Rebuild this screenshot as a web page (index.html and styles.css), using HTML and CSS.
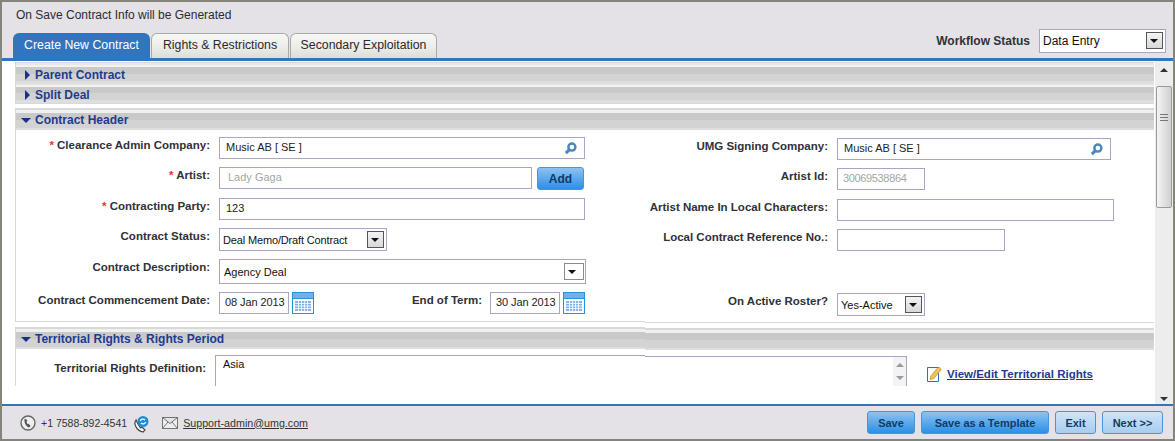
FILE: index.html
```html
<!doctype html>
<html lang="en">
<head>
<title>Create New Contract</title>
<meta charset="utf-8">
<link rel="stylesheet" href="styles.css">
</head>
<body>
<div class="window">
    <div class="notice">On Save Contract Info will be Generated</div>

    <div class="tabbar">
        <div class="tabs">
            <div class="tab active">Create New Contract</div>
            <div class="tab">Rights &amp; Restrictions</div>
            <div class="tab">Secondary Exploitation</div>
        </div>
        <div class="workflow">
            <span class="workflow-label">Workflow Status</span>
            <div class="select workflow-select">Data Entry<span class="drop"></span></div>
        </div>
    </div>

    <div class="content">
        <div class="scroll-area">
            <div class="collapsed">
                <div class="bar first"><span class="tri right"></span>Parent Contract</div>
                <div class="bar"><span class="tri right"></span>Split Deal</div>
            </div>

            <div class="section">
                <div class="bar"><span class="tri down"></span>Contract Header</div>
                <div class="form">
                    <div class="col">
                        <div class="row">
                            <label><i>*</i> Clearance Admin Company:</label>
                            <div class="input w-366">Music AB [ SE ]
                                <svg class="lens" viewBox="0 0 14 14"><circle cx="8.500" cy="5.500" r="3.800" fill="none" stroke="#4a86b8" stroke-width="2.600"/><path d="M5.500 8.500 2 12" stroke="#4a86b8" stroke-width="3.200"/></svg>
                            </div>
                        </div>
                        <div class="row">
                            <label><i>*</i> Artist:</label>
                            <div class="input w-313 grey">Lady Gaga</div>
                            <div class="btn add">Add</div>
                        </div>
                        <div class="row">
                            <label><i>*</i> Contracting Party:</label>
                            <div class="input w-366">123</div>
                        </div>
                        <div class="row">
                            <label>Contract Status:</label>
                            <div class="select w-168 tight">Deal Memo/Draft Contract<span class="drop"></span></div>
                        </div>
                        <div class="row tall">
                            <label>Contract Description:</label>
                            <div class="select flat w-367">Agency Deal<span class="drop"></span></div>
                        </div>
                        <div class="row date-row">
                            <label>Contract Commencement Date:</label>
                            <div class="input date">08 Jan 2013</div>
                            <svg class="cal"><use href="#cal"/></svg>
                            <label class="end-label">End of Term:</label>
                            <div class="input date">30 Jan 2013</div>
                            <svg class="cal"><use href="#cal"/></svg>
                        </div>
                    </div>
                    <div class="col right-col">
                        <div class="row">
                            <label>UMG Signing Company:</label>
                            <div class="input w-274">Music AB [ SE ]
                                <svg class="lens" viewBox="0 0 14 14"><circle cx="8.500" cy="5.500" r="3.800" fill="none" stroke="#4a86b8" stroke-width="2.600"/><path d="M5.500 8.500 2 12" stroke="#4a86b8" stroke-width="3.200"/></svg>
                            </div>
                        </div>
                        <div class="row">
                            <label>Artist Id:</label>
                            <div class="input w-88 grey id">30069538864</div>
                        </div>
                        <div class="row">
                            <label>Artist Name In Local Characters:</label>
                            <div class="input w-277"></div>
                        </div>
                        <div class="row">
                            <label>Local Contract Reference No.:</label>
                            <div class="input w-168"></div>
                        </div>
                        <div class="row tall"></div>
                        <div class="row">
                            <label>On Active Roster?</label>
                            <div class="select w-88">Yes-Active<span class="drop"></span></div>
                        </div>
                    </div>
                </div>
            </div>

            <div class="section last">
                <div class="bar"><span class="tri down"></span>Territorial Rights &amp; Rights Period</div>
                <div class="territory">
                    <label>Territorial Rights Definition:</label>
                    <div class="textarea">Asia
                        <div class="mini-scroll"><span class="up"></span><span class="dn"></span></div>
                    </div>
                    <svg class="pencil" viewBox="0 0 16 16">
                        <path d="M.5 1.500h11v14H.5z" fill="#fff" stroke="#2f6fb5"/>
                        <path d="M3 13.500l.8-3.500 7.200-8.500c1-.8 3.500 1 3 2.500l-7.200 8.500z" fill="#f3c255" stroke="#b98a33" stroke-width=".7"/>
                    </svg>
                    <a class="edit-link">View/Edit Territorial Rights</a>
                </div>
            </div>
        </div>

        <div class="scrollbar">
            <span class="arrow up"></span>
            <div class="thumb"><span></span></div>
            <span class="arrow dn"></span>
        </div>
    </div>

    <div class="footer">
        <div class="contact">
            <svg class="phone" viewBox="0 0 16 16"><circle cx="8" cy="8" r="7" fill="#eeeef0" stroke="#666" stroke-width="1.400"/><path d="M5 3.500c-1.500 2.500 0 6.500 3.500 9l2.200-1.200-2-2.600-1.200.6-1-2.800 1-.9z" fill="#555"/></svg>
            <span class="phone-no">+1 7588-892-4541</span>
            <svg class="skype" viewBox="0 0 16 18"><path d="M3 5c-3 4 1 11 7 12l2-2-3-3-1.500 1-2-3z" fill="#fff" stroke="#444" stroke-width="1.200"/><circle cx="10" cy="6.500" r="5.500" fill="#1c8ed6"/><path d="M7.500 6c0-2 3-2.500 4.500-1M12.500 7c0 2-3 2.500-4.500 1" fill="none" stroke="#fff" stroke-width="1.300"/></svg>
            <svg class="mail" viewBox="0 0 16 12"><path d="M.5.500h15v11H.5zM.5.500l7.500 6 7.500-6M.5 11.500l5.500-6.500M15.500 11.500l-5.500-6.500" fill="#eeeef0" stroke="#555" stroke-width=".8"/></svg>
            <a>Support-admin@umg.com</a>
        </div>
        <div class="actions">
            <div class="btn b-48">Save</div>
            <div class="btn b-128">Save as a Template</div>
            <div class="btn light b-41">Exit</div>
            <div class="btn light b-61">Next &gt;&gt;</div>
        </div>
    </div>
</div>

<svg class="defs" width="0" height="0">
    <symbol id="cal" viewBox="0 0 22 22">
        <rect x=".5" y=".5" width="21" height="21" fill="#fff" stroke="#1f96d8"/>
        <rect x="1" y="1" width="20" height="5" fill="#78aee6"/>
        <path d="M1 6.500h20" stroke="#1f96d8"/>
        <rect x="3" y="9" width="16" height="10" fill="#86b4ea"/>
        <path d="M6.500 9v10M9.500 9v10M12.500 9v10M15.500 9v10M3 11.500h16M3 14h16M3 16.500h16" stroke="#fff" stroke-width=".8"/>
    </symbol>
</svg>
</body>
</html>
```

FILE: styles.css
```css
* { box-sizing: border-box; }

html, body { height: 100%; }

body {
    margin: 0;
    font-family: "Liberation Sans", Arial, sans-serif;
    font-size: 12px;
    color: #222;
    overflow: hidden;
    background: #85847a;
}

.window {
    height: 441px;
    border: 2px solid #85847a;
    background: #e4e2e6;
    display: flex;
    flex-direction: column;
}

.notice {
    height: 24px;
    padding: 6px 0 0 14px;
    color: #2b2b33;
}

.tabbar {
    height: 32px;
    padding: 7px 7px 0 11px;
    display: flex;
    justify-content: space-between;
    flex: none;
}

.tabs { display: flex; align-items: flex-end; }

.tab {
    width: 138px;
    height: 25px;
    padding-top: 4px;
    text-align: center;
    font-size: 12.300px;
    border: 1px solid #a9a9a9;
    border-bottom: 0;
    border-radius: 6px 6px 0 0;
    background: linear-gradient(#f7f7f5, #ecece8 55%, #dcdcd8);
    color: #2a2a2a;
}

.tab + .tab { margin-left: 1px; }
.tab:last-child { width: 147px; }

.tab.active {
    width: 137px;
    border: 0;
    padding-top: 5px;
    background: #3274be;
    color: #fff;
}

.workflow {
    display: flex;
    align-items: center;
    height: 24px;
    margin-top: -4px;
}

.workflow-label {
    font-weight: bold;
    color: #2f3238;
    margin-right: 9px;
}

.select {
    position: relative;
    border: 1px solid #a8a6c8;
    background: #fff;
    color: #111;
    display: flex;
    align-items: center;
    padding-left: 3px;
    font-size: 11px;
}

.tight { letter-spacing: -.15px; }

.workflow-select {
    width: 127px;
    height: 24px;
    font-size: 12px;
}

.drop {
    position: absolute;
    right: 2px;
    top: 2px;
    width: 17px;
    height: 17px;
    border: 1px solid #55555a;
    background: linear-gradient(#f4f4f4, #d8d8d8);
}

.drop::after {
    content: "";
    position: absolute;
    left: 3px;
    top: 6px;
    border: 4px solid transparent;
    border-top: 4px solid #111;
    border-bottom: 0;
}

.content {
    flex: 1;
    min-height: 0;
    display: flex;
    background: #fff;
    border-top: 3px solid #3274be;
    border-bottom: 2px solid #3274be;
}

.scroll-area {
    flex: 1;
    min-width: 0;
    padding: 1px 0 0 13px;
    height: 325px;
    overflow: hidden;
}

.collapsed {
    border-left: 1px solid #d8d8d8;
    border-bottom: 1px solid #d8d8d8;
    margin-bottom: 4px;
}

.bar {
    height: 19px;
    padding: 3px 0 0 5px;
    font-weight: bold;
    color: #1d3b8f;
    display: flex;
    align-items: center;
    background: linear-gradient(#e4e4e4 0 1px, #f2f2f2 1px 3px, #c9c9c9 3px 9px, #d3d3d3 9px 16px, #dedede 16px 19px);
}

.bar.first {
    height: 22px;
    padding-top: 4px;
    background: linear-gradient(#d8d8d8 0 1px, #e8e8e8 1px 3px, #f2f2f2 3px 5px, #c9c9c9 5px 12px, #d3d3d3 12px 19px, #dedede 19px 22px);
}

.tri { display: block; }

.tri.right {
    margin: 0 5px 0 4px;
    border-left: 5px solid #1a2f8c;
    border-top: 5px solid transparent;
    border-bottom: 5px solid transparent;
}

.tri.down {
    margin-right: 4px;
    border-top: 5px solid #1a2f8c;
    border-left: 5px solid transparent;
    border-right: 5px solid transparent;
}

.section {
    position: relative;
    border-left: 1px solid #d8d8d8;
    border-bottom: 1px solid #d8d8d8;
}

.section > .bar {
    position: relative;
    height: 22px;
    padding-top: 2px;
    background: linear-gradient(#d8d8d8 0 2px, #f0f0f0 2px 5px, #c9c9c9 5px 12px, #d3d3d3 12px 20px, #dedede 20px 22px);
}

/* the right half of the capture sits one pixel lower */
.section::after {
    content: "";
    position: absolute;
    left: 629px;
    right: 0;
    bottom: -2px;
    height: 2px;
    background: linear-gradient(#fff 0 1px, #d8d8d8 1px 2px);
}

.section.last::after { display: none; }

.section.last > .bar::after {
    content: "";
    position: absolute;
    left: 629px;
    right: 0;
    top: 0;
    height: 23px;
    background: linear-gradient(#fff 0 1px, #d8d8d8 1px 3px, #f0f0f0 3px 6px, #c9c9c9 6px 13px, #d3d3d3 13px 21px, #dedede 21px 23px);
}

.section.last { border-bottom: 0; margin-top: 5px; }

.form {
    display: flex;
    padding-top: 7px;
    height: 191px;
}

.col { width: 629px; flex: none; }

.right-col { padding-top: 1px; }

.row {
    height: 30px;
    display: flex;
    align-items: flex-start;
}

.row:nth-child(even) { height: 31px; }

.row.tall { height: 33px; }

.date-row { width: 569px; }

.row label {
    width: 194px;
    margin-right: 9px;
    flex: none;
    text-align: right;
    font-size: 11.500px;
    font-weight: bold;
    color: #2f3238;
    padding-top: 2px;
}

.right-col .row label { width: 183px; }

.row .end-label {
    width: auto;
    margin: 0 8px 0 auto;
}

.row i { color: #e2331f; font-style: normal; }

.input {
    position: relative;
    height: 22px;
    border: 1px solid #a8a6c8;
    background: #fff;
    padding: 3px 0 0 6px;
    font-size: 11px;
    color: #222;
}

.grey { color: #a5a5a5; padding-left: 8px; }
.id { padding-left: 5px; letter-spacing: -.35px; }

.date {
    width: 70px;
    padding-left: 5px;
    letter-spacing: -.1px;
}

.w-366 { width: 366px; }
.w-313 { width: 313px; }
.w-274 { width: 274px; }
.w-88 { width: 88px; }
.w-277 { width: 277px; }
.w-168 { width: 168px; }
.w-367 { width: 367px; }

.select.w-168, .select.w-88 { height: 23px; }
.select.w-367 { height: 25px; padding-left: 4px; }

.select.w-367 .drop {
    top: 3px;
    right: 1px;
    width: 20px;
    background: #fff;
    border-color: #8c8c8c;
}

.lens {
    position: absolute;
    right: 7px;
    top: 4px;
    width: 13px;
    height: 13px;
}

.btn {
    height: 23px;
    padding-top: 5px;
    text-align: center;
    border: 1px solid #4f93d6;
    border-radius: 3px;
    background: linear-gradient(#8cc3f2, #2b8fe6);
    color: #123a63;
    font-size: 11px;
    font-weight: bold;
}

.btn.add {
    width: 47px;
    margin-left: 5px;
    padding-top: 4px;
    font-size: 12px;
}

.btn.light {
    background: linear-gradient(#cfe4f7, #a7cdf0);
    color: #163a5e;
}

.b-48 { width: 48px; }
.b-128 { width: 128px; }
.b-41 { width: 41px; }
.b-61 { width: 61px; }

.cal {
    width: 22px;
    height: 22px;
    margin-left: 3px;
    flex: none;
}

.territory {
    display: flex;
    align-items: flex-start;
    padding-top: 6px;
}

.territory label {
    width: 190px;
    margin-right: 9px;
    flex: none;
    text-align: right;
    font-size: 11.500px;
    font-weight: bold;
    color: #2f3238;
    padding-top: 7px;
}

.textarea {
    position: relative;
    width: 692px;
    height: 60px;
    border: 1px solid #a8a6c8;
    padding: 2px 0 0 7px;
    font-size: 11px;
    color: #111;
    background: #fff;
}

.textarea::after {
    content: "";
    position: absolute;
    left: 429px;
    right: -1px;
    top: -1px;
    height: 2px;
    background: linear-gradient(#fff 0 1px, #a8a6c8 1px 2px);
}

.mini-scroll {
    position: absolute;
    right: 0;
    top: 0;
    bottom: 0;
    width: 13px;
    background: #f3f3f3;
}

.mini-scroll span, .arrow {
    display: block;
    width: 0;
    border-left: 4px solid transparent;
    border-right: 4px solid transparent;
}

.mini-scroll .up { margin: 7px 0 0 3px; border-bottom: 4px solid #999; }
.mini-scroll .dn { margin: 9px 0 0 3px; border-top: 4px solid #999; }

.pencil {
    width: 16px;
    height: 16px;
    margin: 11px 0 0 20px;
    flex: none;
}

.edit-link {
    margin: 13px 0 0 4px;
    font-size: 11.500px;
    font-weight: bold;
    color: #1d3b8f;
    text-decoration: underline;
}

.scrollbar {
    position: relative;
    width: 18px;
    background: #ededed;
    flex: none;
    margin-left: 1px;
}

.arrow { margin: 7px 0 0 5px; }
.arrow.up { border-bottom: 4px solid #333; }

.arrow.dn {
    position: absolute;
    bottom: 3px;
    left: 0;
    border-top: 4px solid #333;
}

.thumb {
    position: absolute;
    top: 25px;
    left: 1px;
    width: 16px;
    height: 122px;
    border: 1px solid #9a9a9a;
    border-radius: 2px;
    background: linear-gradient(90deg, #f4f4f4, #d0d0d0);
}

.thumb span {
    position: absolute;
    left: 3px;
    top: 27px;
    width: 8px;
    height: 9px;
    background: repeating-linear-gradient(#777 0 1px, transparent 1px 3px);
}

.footer {
    flex: none;
    height: 33px;
    padding: 0 10px 0 18px;
    display: flex;
    justify-content: space-between;
    align-items: center;
}

.contact {
    display: flex;
    align-items: center;
    font-size: 10.700px;
    color: #333;
}

.phone-no { font-size: 10.500px; }

.phone { width: 16px; height: 16px; margin-right: 5px; }
.skype { width: 16px; height: 18px; margin: 3px 13px 0 6px; }
.mail { width: 16px; height: 12px; margin-right: 5px; }

.contact a { text-decoration: underline; color: #333; }

.actions { display: flex; gap: 6px; }

.defs { position: absolute; }
```
